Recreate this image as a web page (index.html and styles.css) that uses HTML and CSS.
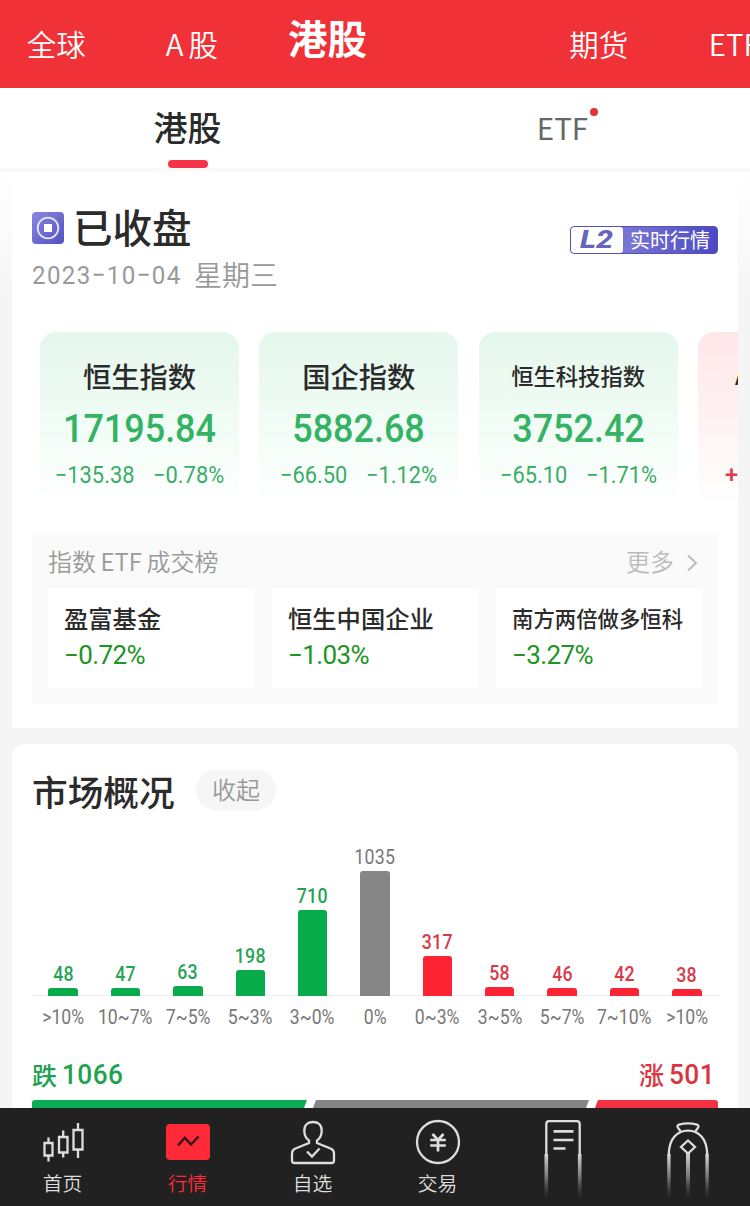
FILE: index.html
```html
<!DOCTYPE html>
<html lang="zh-CN">
<head>
    <meta charset="UTF-8">
    <meta name="viewport" content="width=device-width, initial-scale=1.0">
    <title>港股行情</title>
    <link rel="stylesheet" href="styles.css">
</head>
<body>
    <header class="top-nav">
        <a class="top-item">全球</a>
        <a class="top-item"><span class="latin-a">A</span>股</a>
        <a class="top-item active">港股</a>
        <a class="top-item"></a>
        <a class="top-item">期货</a>
        <a class="top-item">ETF</a>
    </header>

    <nav class="sub-nav">
        <a class="sub-item active">港股</a>
        <a class="sub-item"><span class="dot-label">ETF</span></a>
    </nav>

    <main class="content">
        <section class="panel quotes">
            <div class="status">
                <div>
                    <div class="status-title">
                        <svg class="status-icon" width="32" height="32" viewBox="0 0 32 32">
                            <defs>
                                <linearGradient id="purple" x1="0" y1="0" x2="1" y2="1">
                                    <stop offset="0" stop-color="#8b88e0"/>
                                    <stop offset="1" stop-color="#5250c0"/>
                                </linearGradient>
                            </defs>
                            <rect width="32" height="32" rx="4" fill="url(#purple)"/>
                            <circle cx="16" cy="16" r="10.3" fill="none" stroke="#e6e5fa" stroke-width="1.8"/>
                            <rect x="12" y="12" width="8" height="8" fill="#fff"/>
                        </svg>
                        <h1>已收盘</h1>
                    </div>
                    <div class="date"><span class="num">2023−10−04</span><span class="weekday">星期三</span></div>
                </div>
                <div class="level-badge"><span class="level"><em>L2</em></span><span class="level-text">实时行情</span></div>
            </div>

            <div class="index-list">
                <div class="index-card">
                    <div class="index-name">恒生指数</div>
                    <div class="index-value">17195.84</div>
                    <div class="index-change"><span>−135.38</span><span>−0.78%</span></div>
                </div>
                <div class="index-card">
                    <div class="index-name">国企指数</div>
                    <div class="index-value">5882.68</div>
                    <div class="index-change"><span>−66.50</span><span>−1.12%</span></div>
                </div>
                <div class="index-card">
                    <div class="index-name small">恒生科技指数</div>
                    <div class="index-value">3752.42</div>
                    <div class="index-change"><span>−65.10</span><span>−1.71%</span></div>
                </div>
                <div class="index-card up">
                    <div class="index-name small">A</div>
                    <div class="index-value"></div>
                    <div class="index-change"><span>+</span></div>
                </div>
            </div>

            <div class="etf-box">
                <div class="etf-head">
                    <span class="etf-title">指数<span class="etf-latin">ETF</span>成交榜</span>
                    <span class="more">更多
                        <svg width="12" height="18" viewBox="0 0 12 18"><path d="M2 1.5 10 9 2 16.5" fill="none" stroke="#bbb" stroke-width="2"/></svg>
                    </span>
                </div>
                <div class="etf-list">
                    <div class="etf-card">
                        <div class="etf-name">盈富基金</div>
                        <div class="etf-rate">−0.72%</div>
                    </div>
                    <div class="etf-card">
                        <div class="etf-name">恒生中国企业</div>
                        <div class="etf-rate">−1.03%</div>
                    </div>
                    <div class="etf-card">
                        <div class="etf-name small">南方两倍做多恒科</div>
                        <div class="etf-rate">−3.27%</div>
                    </div>
                </div>
            </div>
        </section>

        <section class="panel market">
            <div class="market-head">
                <h2>市场概况</h2>
                <span class="fold">收起</span>
            </div>

            <div class="chart">
                <div class="col down"><b>48</b><i style="height: 8px"></i></div>
                <div class="col down"><b>47</b><i style="height: 8px"></i></div>
                <div class="col down"><b>63</b><i style="height: 10px"></i></div>
                <div class="col down"><b>198</b><i style="height: 26px"></i></div>
                <div class="col down"><b>710</b><i style="height: 86px"></i></div>
                <div class="col flat"><b>1035</b><i style="height: 125px"></i></div>
                <div class="col rise"><b>317</b><i style="height: 40px"></i></div>
                <div class="col rise"><b>58</b><i style="height: 9px"></i></div>
                <div class="col rise"><b>46</b><i style="height: 8px"></i></div>
                <div class="col rise"><b>42</b><i style="height: 8px"></i></div>
                <div class="col rise"><b>38</b><i style="height: 7px"></i></div>
            </div>
            <div class="axis">
                <span>&gt;10%</span>
                <span>10~7%</span>
                <span>7~5%</span>
                <span>5~3%</span>
                <span>3~0%</span>
                <span>0%</span>
                <span>0~3%</span>
                <span>3~5%</span>
                <span>5~7%</span>
                <span>7~10%</span>
                <span>&gt;10%</span>
            </div>

            <div class="totals">
                <div class="total total-down">跌<span>1066</span></div>
                <div class="total total-rise">涨<span>501</span></div>
            </div>
            <div class="ratio">
                <div class="ratio-down"></div>
                <div class="ratio-flat"></div>
                <div class="ratio-rise"></div>
            </div>
        </section>
    </main>

    <footer class="tab-bar">
        <a class="tab">
            <svg class="tab-icon" width="50" height="48" viewBox="0 0 50 48">
                <path d="M6.500 19H14.500V31.500H6.500ZM10.500 13.500V19M10.500 31.500V37.500M21 13H29.500V28.500H21ZM25.200 6.500V13M25.200 28.500V33.500M35.500 6H44.500V25.500H35.500ZM40 -1V6M40 25.500V34"/>
            </svg>
            <span>首页</span>
        </a>
        <a class="tab active">
            <svg class="tab-icon" width="50" height="48" viewBox="0 0 50 48">
                <rect class="fill" x="3" y="0" width="44" height="36" rx="4"/>
                <path class="dark" d="M15 21.500 21.800 13.800 28 20.500 35.500 12.500"/>
            </svg>
            <span>行情</span>
        </a>
        <a class="tab">
            <svg class="tab-icon" width="50" height="48" viewBox="0 0 50 48">
                <path d="M21 16.500C18 14.500 16.300 10.500 16.300 6.500C16.300 1 20 -2 25 -2S33.700 1 33.700 6.500C33.700 10.500 32 14.500 29 16.500V19L42.500 24.500C45 25.500 46 27 46 29.500V36.500Q46 39 43.500 39H6.500Q4 39 4 36.500V29.500C4 27 5 25.500 7.500 24.500L21 19Z"/>
                <path d="M19 27.500 24 32.500 31.500 24.500"/>
            </svg>
            <span>自选</span>
        </a>
        <a class="tab">
            <svg class="tab-icon" width="50" height="48" viewBox="0 0 50 48">
                <circle cx="25" cy="18" r="21"/>
                <path class="bold" d="M19.500 10 25 16 30.500 10M25 16V27.500M17.200 16H32.800M17.200 21.500H32.800"/>
            </svg>
            <span>交易</span>
        </a>
        <a class="tab">
            <svg class="tab-icon" width="50" height="80" viewBox="0 0 50 80">
                <defs>
                    <linearGradient id="fade" x1="0" y1="0" x2="0" y2="1">
                        <stop offset="0" stop-color="#d8d8d8"/>
                        <stop offset="0.5" stop-color="#999" stop-opacity=".75"/>
                        <stop offset="1" stop-color="#555" stop-opacity="0"/>
                    </linearGradient>
                </defs>
                <path d="M8.300 30V0Q8.300 -2.800 11 -2.800H39Q41.700 -2.800 41.700 0V30"/>
                <path class="bold" d="M15.500 7.300H35.500M15.500 16H35.500M15.500 24.500H27.500"/>
                <rect class="trail" x="6.500" y="30" width="3.600" height="45"/>
                <rect class="trail" x="39.900" y="30" width="3.600" height="45"/>
            </svg>
        </a>
        <a class="tab">
            <svg class="tab-icon" width="50" height="80" viewBox="0 0 50 80">
                <path d="M18 8 14.800 3.500Q13.800 1.500 16 .7Q25 -1.800 34 .7Q36.200 1.500 35.200 3.500L32 8M5.800 31C5.800 15 14 6.700 25 6.700S44.200 15 44.200 31"/>
                <path d="M25 16.500 32 23 25 29.500 18 23Z"/>
                <rect class="trail" x="4.200" y="30" width="3.400" height="45"/>
                <rect class="trail" x="23" y="29" width="4" height="46"/>
                <rect class="trail" x="42.400" y="30" width="3.400" height="45"/>
            </svg>
        </a>
    </footer>
</body>
</html>
```
FILE: styles.css
```css
* {
    box-sizing: border-box;
}

body {
    font-family: "Noto Sans CJK SC", sans-serif;
    background-color: #f5f5f5;
    margin: 0;
    height: 1206px;
    display: flex;
    flex-direction: column;
    overflow: hidden;
    color: #2b2b2b;
}

h1, h2 {
    margin: 0;
    font-weight: 500;
}

/* top navigation */
.top-nav {
    display: flex;
    flex: none;
    height: 88px;
    padding-top: 2px;
    background-color: #f03137;
    color: #fff;
    overflow: hidden;
}

.top-item {
    flex: none;
    width: 135.600px;
    line-height: 82px;
    text-align: center;
    font-size: 29.500px;
    font-weight: 350;
}

.top-item:first-child {
    margin-left: -11.500px;
}

.top-item.active {
    font-size: 39.500px;
    font-weight: 700;
    line-height: 70px;
}

.latin-a {
    margin-right: 5px;
}

.sub-nav {
    display: flex;
    flex: none;
    height: 84px;
    background-color: #fff;
    border-bottom: 4px solid #fafafa;
}

.sub-item {
    flex: 1;
    display: flex;
    flex-direction: column;
    align-items: center;
    font-size: 29.500px;
    line-height: 78px;
    color: #666;
}

.sub-item.active {
    font-size: 34px;
    font-weight: 500;
    color: #2b2b2b;
}

.sub-item.active::after {
    content: "";
    width: 40px;
    height: 8px;
    margin-top: -6px;
    border-radius: 4px;
    background-color: #f53349;
}

.dot-label {
    position: relative;
}

.dot-label::after {
    content: "";
    position: absolute;
    top: 20px;
    right: -10px;
    width: 8px;
    height: 8px;
    border-radius: 50%;
    background-color: #e2303c;
}

.content {
    flex: 1;
    min-height: 0;
    overflow: hidden;
    padding: 0 12px;
    background: linear-gradient(#fff, #f5f5f5 130px);
}

.panel {
    background-color: #fff;
}

/* quotes */
.quotes {
    height: 556px;
    padding: 36px 20px 0;
    overflow: hidden;
}

.status {
    display: flex;
    justify-content: space-between;
    height: 124px;
}

.status-title {
    display: flex;
    align-items: center;
    height: 40px;
}

.status-icon {
    margin-right: 9px;
}

.status-title h1 {
    padding-bottom: 4px;
    font-size: 39.500px;
    line-height: 36px;
}

.date {
    display: flex;
    align-items: center;
    height: 52px;
    color: #999;
    font-size: 28px;
    font-weight: 350;
}

.num {
    width: 162px;
    font-family: Roboto, sans-serif;
    font-size: 26.500px;
    font-weight: 450;
    letter-spacing: 1.500px;
    transform: scaleX(0.91);
    transform-origin: left;
}

.weekday {
    line-height: 52px;
}

.level-badge {
    display: flex;
    width: 148px;
    height: 28px;
    margin-top: 18px;
    border: 1px solid #5553b8;
    border-radius: 4px;
    background: linear-gradient(90deg, #7774d2 40%, #4b48c4);
    overflow: hidden;
}

.level {
    width: 52px;
    border-radius: 3px;
    background-color: #fff;
    color: #6764bd;
    font: 800 25px/26px Roboto, sans-serif;
    text-align: center;
}

.level em {
    display: inline-block;
    transform: scaleX(1.22);
}

.level-text {
    flex: 1;
    text-align: center;
    color: #fff;
    font-size: 20px;
    line-height: 25px;
}

.index-list {
    display: flex;
    gap: 20.300px;
    margin: 0 -20px 0 8px;
    overflow: hidden;
}

.index-card {
    flex: none;
    width: 199px;
    height: 173px;
    padding-top: 20px;
    border-radius: 16px;
    background: linear-gradient(#e5f7ec, #f0fcf5 50%, #fff);
    text-align: center;
}

.index-name {
    height: 47px;
    font-size: 28.300px;
    font-weight: 500;
    line-height: 47px;
}

.index-name.small {
    font-size: 22.300px;
}

.index-value {
    height: 59px;
    font-family: Roboto, sans-serif;
    font-size: 39.500px;
    font-weight: 500;
    line-height: 60px;
    color: #33b363;
    transform: scaleX(0.91);
}

.index-change {
    display: flex;
    justify-content: center;
    gap: 20px;
    font-family: Roboto, sans-serif;
    font-size: 23.500px;
    font-weight: 450;
    line-height: 34px;
    color: #3aae68;
    white-space: nowrap;
    transform: scaleX(0.93);
}

.index-card.up {
    padding-left: 27px;
    text-align: left;
    background: linear-gradient(#ffe6e9, #fff2f3 50%, #fff);
}

.up .index-name {
    padding-left: 10px;
}

.up .index-change {
    justify-content: flex-start;
    color: #e0384c;
    font-weight: 500;
    transform: none;
}

/* etf ranking */
.etf-box {
    height: 170px;
    margin-top: 28px;
    padding: 0 16px;
    background-color: #fafafa;
}

.etf-head {
    display: flex;
    justify-content: space-between;
    height: 55px;
    font-size: 24px;
    font-weight: 350;
    line-height: 56px;
    color: #999;
}

.etf-latin {
    margin: 0 4.500px;
}

.more {
    display: flex;
    align-items: center;
    gap: 12px;
    padding-right: 4px;
    line-height: 60px;
    color: #bbb;
}

.more svg {
    margin-top: 5px;
}

.etf-list {
    display: flex;
    gap: 18px;
}

.etf-card {
    flex: 1;
    height: 101px;
    padding: 12px 0 0 16px;
    background-color: #fff;
    white-space: nowrap;
}

.etf-name {
    font-size: 24.300px;
    font-weight: 500;
    line-height: 36px;
    height: 37px;
}

.etf-name.small {
    font-size: 21.400px;
}

.etf-rate {
    font-family: Roboto, sans-serif;
    font-size: 26px;
    line-height: 37px;
    letter-spacing: -0.600px;
    color: #209323;
}

/* market overview */
.market {
    height: 400px;
    margin-top: 16px;
    padding: 24px 20px 0;
    border-radius: 14px 14px 0 0;
}

.market-head {
    display: flex;
    align-items: center;
    gap: 20px;
    height: 44px;
}

.market-head h2 {
    width: 144px;
    font-size: 35.700px;
    line-height: 43px;
}

.fold {
    width: 80px;
    height: 40px;
    border-radius: 20px;
    background-color: #f6f6f6;
    color: #999;
    font-size: 24px;
    font-weight: 350;
    line-height: 38px;
    text-align: center;
}

.chart {
    display: flex;
    height: 184px;
    border-bottom: 1px solid #eee;
}

.col {
    flex: 1;
    display: flex;
    flex-direction: column;
    justify-content: flex-end;
    align-items: center;
    margin-bottom: -1px;
}

.col b {
    font-family: Roboto, sans-serif;
    font-size: 19.700px;
    font-weight: 500;
    line-height: 26px;
    letter-spacing: 0.300px;
    transform: scaleX(0.9);
}

.col i {
    width: 29.500px;
    border-radius: 3px 3px 0 0;
    background-color: currentColor;
}

.down {
    color: #07ab49;
}

.flat {
    color: #868686;
}

.rise {
    color: #fc2433;
}

.down b {
    color: #27a356;
}

.flat b {
    font-weight: 450;
    color: #777;
}

.rise b {
    color: #d93a48;
}

.axis {
    display: flex;
    height: 43px;
    font-family: Roboto, sans-serif;
    font-size: 20px;
    line-height: 43px;
    color: #777;
}

.axis span {
    flex: 1 1 0;
    width: 0;
    display: flex;
    justify-content: center;
    white-space: nowrap;
    transform: scaleX(0.88);
}

.totals {
    display: flex;
    justify-content: space-between;
    height: 61px;
    padding: 0 3px 0 0;
}

.total {
    display: flex;
    align-items: center;
    gap: 5px;
    height: 70px;
    font-size: 25px;
    font-weight: 500;
}

.total span {
    font-family: Roboto, sans-serif;
    font-size: 28.500px;
    letter-spacing: 0.500px;
    padding-top: 1px;
    transform: scaleX(0.92);
    transform-origin: left;
}

.total-down {
    color: #1fa351;
}

.total-rise {
    color: #d83442;
}

.total-rise span {
    margin-right: -4px;
}

.ratio {
    display: flex;
    gap: 5px;
    height: 24px;
}

.ratio-down {
    width: 275px;
    background-color: #0cae55;
    border-top-left-radius: 3px;
    clip-path: polygon(0 0, 100% 0, calc(100% - 9px) 100%, 0 100%);
}

.ratio-flat {
    width: 277px;
    background-color: #868686;
    clip-path: polygon(4px 0, 100% 0, calc(100% - 9px) 100%, -5px 100%);
}

.ratio-rise {
    flex: 1;
    background-color: #f53040;
    border-top-right-radius: 3px;
    clip-path: polygon(4px 0, 100% 0, 100% 100%, -5px 100%);
}

/* bottom tab bar */
.tab-bar {
    display: flex;
    flex: none;
    height: 98px;
    background-color: #212121;
    color: #ddd;
}

.tab {
    flex: 1;
    display: flex;
    flex-direction: column;
    align-items: center;
    padding-top: 16px;
    font-size: 19.800px;
    font-weight: 350;
    line-height: 22px;
}

.tab.active {
    color: #ff2a38;
}

.tab-icon {
    overflow: visible;
    fill: none;
    stroke: #ddd;
    stroke-width: 2.300;
}

.tab-icon .bold {
    stroke-width: 2.700;
}

.tab-icon .fill {
    fill: #ff2a38;
    stroke: none;
}

.tab-icon .dark {
    stroke: #3b1215;
    stroke-width: 2.400;
}

.tab-icon .trail {
    fill: url(#fade);
    stroke: none;
}
```
